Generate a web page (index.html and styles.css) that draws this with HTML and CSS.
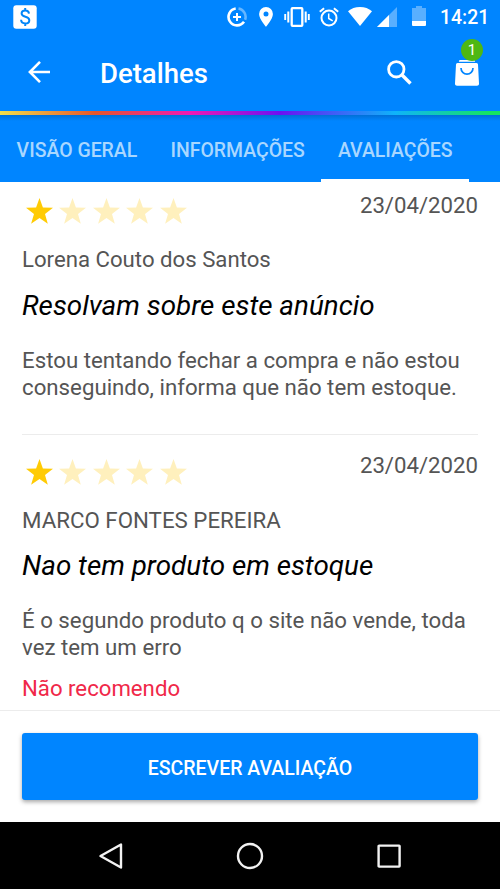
FILE: index.html
```html
<!DOCTYPE html>
<html lang="pt-BR">
<head>
<meta charset="utf-8">
<meta name="viewport" content="width=device-width, initial-scale=1">
<title>Detalhes</title>
<link rel="stylesheet" href="styles.css">
</head>
<body>
<svg width="0" height="0" class="defs" aria-hidden="true">
  <symbol id="star" viewBox="0 0 27 26"><path d="M13.5 0l3.4 9.500 10.100.3-8 6.200 2.800 9.800-8.300-5.700-8.400 5.700L8 16 0 9.800l10.100-.3z"/></symbol>
</svg>
<div class="screen">
  <div class="status">
    <svg class="money" width="24" height="24" viewBox="0 0 24 24"><rect x=".3" y=".3" width="23.400" height="23.400" rx="3" fill="#fff"/><path d="M16 8.700c-.2-2.100-1.600-3.300-3.700-3.300-2.200 0-3.700 1.200-3.700 3.100 0 4.300 7.700 2.300 7.700 6.700 0 2-1.700 3.300-4 3.300-2.500 0-4.100-1.300-4.200-3.700M12.200 3v2.600M12.200 18.300v2.600" fill="none" stroke="#0085f8" stroke-width="2"/></svg>
    <svg class="saver" width="20" height="20" viewBox="0 0 20 20" fill="none" stroke="#fff" stroke-width="2.600"><path d="M11.500 1.500a8.500 8.500 0 0 1 6.600 11.200" opacity=".4"/><path d="M8.700 1.500a8.500 8.500 0 1 0 8.300 13.300"/><path d="M10 6v8M6 10h8" stroke-width="2"/></svg>
    <svg class="pin" width="14" height="20" viewBox="0 0 14 20"><path d="M7 0a6.900 6.900 0 0 0-6.900 6.900C.1 12 7 19.700 7 19.700s6.900-7.700 6.900-12.800A6.900 6.900 0 0 0 7 0zm0 9.400a2.500 2.500 0 1 1 0-5 2.500 2.500 0 0 1 0 5z" fill="#fff"/></svg>
    <svg class="vibrate" width="26" height="20" viewBox="0 0 26 20" fill="none" stroke="#fff"><rect x="7.700" y="1.200" width="10.600" height="17.600" rx=".8" stroke-width="2.300"/><path d="M4.300 4.500v11M21.700 4.500v11" stroke-width="2"/><path d="M1.200 7v6M24.800 7v6" stroke-width="1.900"/></svg>
    <svg class="alarm" width="20" height="20" viewBox="0 0 20 20" fill="none" stroke="#fff" stroke-width="2"><circle cx="10" cy="11" r="7.500"/><path d="M.8 4.800l4.300-3.600M19.200 4.800l-4.300-3.600"/><path d="M9.700 6.500v5l4 2.400" stroke-width="1.500"/></svg>
    <svg class="wifi" width="24" height="19" viewBox="0 0 24 19"><path d="M12 19L0 4.200C3.200 1.500 7.300 0 12 0s8.800 1.500 12 4.200z" fill="#fff"/></svg>
    <svg class="signal" width="20" height="20" viewBox="0 0 20 20"><path d="M0 20L20 0v20z" fill="#fff" opacity=".35"/><path d="M0 20L12 8v12z" fill="#fff"/></svg>
    <svg class="battery" width="14" height="20" viewBox="0 0 14 20" fill="#fff"><path d="M4 0h6v2h4v13H0V2h4z" opacity=".35"/><path d="M0 15h14v4a1 1 0 0 1-1 1H1a1 1 0 0 1-1-1z"/></svg>
    <span class="time">14:21</span>
  </div>
  <header class="appbar">
    <svg class="back" width="22" height="22" viewBox="0 0 22 22" fill="none" stroke="#fff" stroke-width="2.600"><path d="M22 11H2M12 .9L1.900 11 12 21.100"/></svg>
    <h1>Detalhes</h1>
    <svg class="search" width="25" height="25" viewBox="0 0 25 25" fill="none" stroke="#fff"><circle cx="9.300" cy="9.300" r="7.700" stroke-width="2.800"/><path d="M14.800 14.800l8.700 8.700" stroke-width="3.400"/></svg>
    <div class="cart">
      <svg width="24" height="26" viewBox="0 0 24 26"><path d="M4.500 0h15l.7 1.800H3.800zM2.500 3h19a1.500 1.500 0 0 1 1.500 1.500l1 19a2 2 0 0 1-2 2.200H2a2 2 0 0 1-2-2.200l1-19A1.500 1.500 0 0 1 2.500 3z" fill="#fff"/><path d="M6 8a6 6.200 0 0 0 12 0" fill="none" stroke="#0085ff" stroke-width="1.700"/></svg>
      <span class="badge">1</span>
    </div>
  </header>
  <div class="rainbow"></div>
  <nav class="tabs">
    <span class="tab">VISÃO GERAL</span>
    <span class="tab">INFORMAÇÕES</span>
    <span class="tab active">AVALIAÇÕES</span>
  </nav>
  <main class="reviews">
    <article class="review">
      <div class="top">
        <div class="stars"><svg class="on"><use href="#star"/></svg><svg><use href="#star"/></svg><svg><use href="#star"/></svg><svg><use href="#star"/></svg><svg><use href="#star"/></svg></div>
        <span class="date">23/04/2020</span>
      </div>
      <div class="author">Lorena Couto dos Santos</div>
      <h2>Resolvam sobre este anúncio</h2>
      <p>Estou tentando fechar a compra e não estou<br>conseguindo, informa que não tem estoque.</p>
    </article>
    <article class="review">
      <div class="top">
        <div class="stars"><svg class="on"><use href="#star"/></svg><svg><use href="#star"/></svg><svg><use href="#star"/></svg><svg><use href="#star"/></svg><svg><use href="#star"/></svg></div>
        <span class="date">23/04/2020</span>
      </div>
      <div class="author">MARCO FONTES PEREIRA</div>
      <h2>Nao tem produto em estoque</h2>
      <p>É o segundo produto q o site não vende, toda<br>vez tem um erro</p>
      <div class="verdict">Não recomendo</div>
    </article>
  </main>
  <footer class="action"><button>ESCREVER AVALIAÇÃO</button></footer>
  <div class="sysnav">
    <svg width="26" height="28" viewBox="0 0 26 28"><path d="M23 2.500v23L2.500 14z"/></svg>
    <svg width="28" height="28" viewBox="0 0 28 28"><circle cx="14" cy="14" r="12"/></svg>
    <svg width="26" height="28" viewBox="0 0 26 28"><rect x="2.600" y="3.600" width="21" height="21" rx=".5"/></svg>
  </div>
</div>
</body>
</html>
```
FILE: styles.css
```css
* { box-sizing: border-box; }
body { margin: 0; background: #fff; font-family: Roboto, "Liberation Sans", sans-serif; }
svg { display: block; flex: none; }
h1, h2, p { margin: 0; }
.defs { position: absolute; }
.screen { width: 500px; height: 889px; display: flex; flex-direction: column; overflow: hidden; }

.status { height: 33px; flex: none; display: flex; align-items: flex-start; padding: 7px 0 0 13px; background: #0085ff; color: #fff; }
.money { margin: -2px 190px 0 0; }
.saver { margin-right: 12px; }
.pin { margin-right: 11px; }
.vibrate { margin-right: 9px; }
.alarm { margin-right: 9px; }
.wifi { margin-right: 5px; }
.signal { margin-right: 15px; }
.battery { margin: -1px 14px 0 0; }
.time { font-size: 19.4px; line-height: 22px; font-weight: 500; }

.appbar { height: 78px; flex: none; display: flex; align-items: center; padding-left: 28px; background: #0085ff; color: #fff; }
.appbar h1 { margin-left: 50px; width: 287px; font-size: 27.5px; line-height: 34px; font-weight: 500; padding-top: 4px; }
.cart { position: relative; margin: 1px 0 0 43px; }
.badge { position: absolute; left: 6px; top: -21px; width: 22px; height: 22px; border-radius: 50%; background: #4fb812; font-size: 15px; line-height: 22px; text-align: center; }
.rainbow { height: 4px; flex: none; background: linear-gradient(90deg, #f3df4b 0, #e5562a 19%, #ee19b4 38%, #6c11f2 56%, #0fb3fa 79%, #15e55f 98%); }

.tabs { height: 67px; flex: none; display: flex; background: linear-gradient(#0070d8, #0085ff 6px); }
.tab { padding: 0 16.600px; font-size: 19.450px; line-height: 71px; height: 67px; font-weight: 500; color: #a9d7ff; white-space: nowrap; }
.tab.active { border-bottom: 3px solid #fff; }

.reviews { flex: 1; padding: 0 22px; color: #555; font-size: 22.2px; }
.review { height: 252px; }
.review + .review { height: 276px; border-top: 1px solid #ececec; padding-top: 7px; }
.top { display: flex; justify-content: space-between; height: 59px; }
.stars { display: flex; gap: 6.400px; padding: 16px 0 0 4px; }
.stars svg { width: 27px; height: 26px; fill: #fff0bd; }
.stars .on { fill: #ffcb05; }
.date { line-height: 26px; padding-top: 10px; }
.author { line-height: 26px; padding-top: 5px; }
.review h2 { font-size: 27.8px; line-height: 34px; font-weight: 400; font-style: italic; color: #000; margin-top: 17px; white-space: nowrap; }
.review p { font-size: 22.250px; line-height: 27px; margin-top: 24px; white-space: nowrap; }
.review + .review .stars { padding-top: 17px; }
.review + .review .author { padding-top: 6px; font-size: 22.300px; }
.review + .review h2 { margin-top: 16px; }
.verdict { line-height: 26px; margin-top: 14px; color: #f02849; }

.action { height: 112px; flex: none; padding: 22px 22px 0; border-top: 1px solid #ececec; background: #fff; }
.action button { display: block; width: 100%; height: 67px; border: 0; border-radius: 3px; background: #0085ff; box-shadow: 0 2px 4px rgba(0, 0, 0, .35); color: #fff; font: 500 19.5px Roboto, sans-serif; padding-top: 4px; }

.sysnav { height: 67px; flex: none; display: flex; align-items: center; justify-content: center; gap: 112px; background: #000; }
.sysnav svg { fill: none; stroke: #f2f2f2; stroke-width: 2.400; stroke-linejoin: round; }
```
